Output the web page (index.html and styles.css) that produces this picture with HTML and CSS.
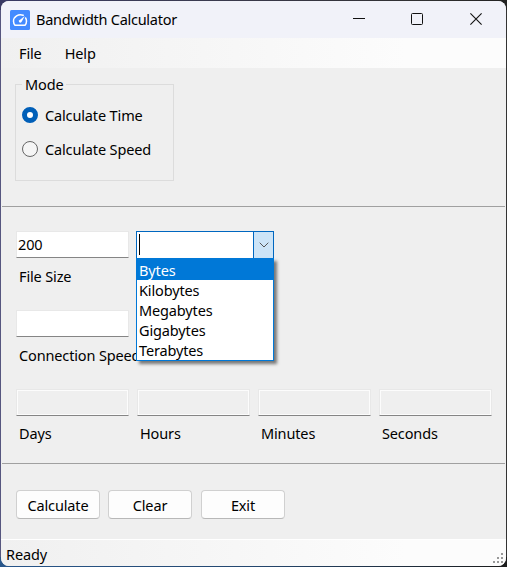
FILE: index.html
```
<!DOCTYPE html>
<html lang="en">
<head>
<meta charset="utf-8">
<title>Bandwidth Calculator</title>
<link rel="stylesheet" href="styles.css">
</head>
<body>
<div class="window">
  <header class="titlebar">
    <svg class="app-icon" width="20" height="20" viewBox="0 0 20 20">
      <rect width="20" height="20" rx="1.5" fill="#438bff"/>
      <path d="M13.2 5.2C8.500 3.500 3.500 6.500 3.500 11.200Q3.500 13.500 5 15.200H15Q16.500 13.500 16.500 11.200Q16.500 9.500 15.600 8" fill="none" stroke="#fff" stroke-width="1.500" stroke-linecap="round" stroke-linejoin="round"/>
      <path d="M14.800 6L11.500 12.100Q10.500 13.200 9.300 12.300Q8.300 11.200 9.400 10.200Z" fill="#fff"/>
    </svg>
    <h1 class="title">Bandwidth Calculator</h1>
    <div class="controls">
      <svg width="12" height="12" viewBox="0 0 12 12"><path d="M0 5.500H12" stroke="#111"/></svg>
      <svg width="12" height="12" viewBox="0 0 12 12"><rect x=".5" y=".5" width="11" height="11" rx="1" fill="none" stroke="#111"/></svg>
      <svg class="close" width="12" height="12" viewBox="0 0 12 12"><path d="M.4.4L11.600 11.600M11.600.4L.4 11.600" stroke="#111" stroke-width="1.100"/></svg>
    </div>
  </header>
  <nav class="menubar"><span>File</span><span class="help">Help</span></nav>
  <main>
    <section class="mode-section">
      <fieldset class="mode">
        <legend>Mode</legend>
        <label class="option"><i class="radio checked"></i><span>Calculate Time</span></label>
        <label class="option"><i class="radio"></i><span>Calculate Speed</span></label>
      </fieldset>
    </section>
    <section class="fields">
      <div class="row">
        <div class="field"><div class="input">200</div><div class="label">File Size</div></div>
        <div class="combo">
          <div class="combo-box">
            <span class="caret"></span>
            <span class="drop"><svg width="10" height="6" viewBox="0 0 10 6"><path d="M.7.7L5 5L9.300.7" fill="none" stroke="#555"/></svg></span>
          </div>
          <ul class="list">
            <li class="selected">Bytes</li>
            <li>Kilobytes</li>
            <li>Megabytes</li>
            <li>Gigabytes</li>
            <li>Terabytes</li>
          </ul>
        </div>
      </div>
      <div class="row">
        <div class="field"><div class="input"></div><div class="label">Connection Speed</div></div>
      </div>
      <div class="row results">
        <div class="field"><div class="input readonly"></div><div class="label">Days</div></div>
        <div class="field"><div class="input readonly"></div><div class="label">Hours</div></div>
        <div class="field"><div class="input readonly"></div><div class="label">Minutes</div></div>
        <div class="field"><div class="input readonly"></div><div class="label">Seconds</div></div>
      </div>
    </section>
    <section class="actions">
      <button>Calculate</button><button>Clear</button><button class="exit">Exit</button>
    </section>
  </main>
  <footer class="status">
    <span>Ready</span>
    <svg width="10" height="10" viewBox="0 0 10 10" fill="#999"><path d="M8 0h2v2H8zM4 4h2v2H4zM8 4h2v2H8zM0 8h2v2H0zM4 8h2v2H4zM8 8h2v2H8z"/></svg>
  </footer>
</div>
</body>
</html>
```
FILE: styles.css
```
* { box-sizing: border-box; }
body {
  margin: 0;
  height: 567px;
  padding: 1px;
  overflow: hidden;
  background: linear-gradient(90deg, #383964 0, #3b3b50 40%, #303030 85%, #222 100%) top / 100% 10px no-repeat,
    linear-gradient(90deg, #28568a 0, #24476f 50%, #1c1c1c 100%) bottom / 100% 10px no-repeat,
    linear-gradient(90deg, #56567f 50%, #333 50%);
  font: 14.5px/20px "Noto Sans", "Open Sans", sans-serif;
  letter-spacing: -0.14px;
  color: #000;
}
.window {
  display: flex;
  flex-direction: column;
  width: 505px;
  height: 565px;
  border-radius: 8px;
  overflow: hidden;
  background: #efefef;
}
.titlebar {
  display: flex;
  align-items: center;
  height: 37px;
  padding: 0 24px 0 9px;
  background: #f1f2f9;
}
.title { margin: -2px 0 0 6px; font-size: 14.5px; font-weight: 400; letter-spacing: -0.27px; }
.controls { display: flex; gap: 46px; margin: -1px 0 0 auto; }
.controls .close { margin-left: 1px; }
.controls svg, .app-icon { display: block; }
.menubar {
  display: flex;
  gap: 23px;
  height: 30px;
  padding: 5px 18px;
  background: linear-gradient(90deg, #f0f0f0, #fcfcfc 80%);
}
main { flex: 1; }
.mode-section {
  height: 139px;
  margin: 0 1px;
  padding: 7px 13px 0;
  border-bottom: 1px solid #a0a0a0;
}
.mode {
  width: 159px;
  height: 106px;
  margin: 0;
  padding: 11px 6px 0;
  border: 1px solid #dcdcdc;
}
.mode legend { height: 19px; padding: 0 3px; line-height: 19px; }
.option { display: flex; align-items: center; gap: 7px; height: 20px; margin-bottom: 14px; }
.radio {
  width: 16px;
  height: 16px;
  border: 1px solid #666;
  border-radius: 50%;
  background: #f5f5f5;
}
.radio.checked { border: 5px solid #005fb8; background: #fff; }
.fields {
  height: 257px;
  margin: 0 1px;
  padding: 24px 13px 0;
  border-bottom: 1px solid #a0a0a0;
}
.row { display: flex; gap: 8px; height: 79px; }
.field { width: 113px; white-space: nowrap; }
.input {
  width: 113px;
  height: 27px;
  margin-left: 1px;
  padding: 2px 1px;
  border: 1px solid #e8e8e8;
  border-bottom-color: #858585;
  background: #fff;
}
.readonly { background: #efefef; box-shadow: inset 0 0 0 1px #fcfcfc; }
.label { padding: 8px 0 0 4px; }
.results .label { padding-top: 7px; }
.combo { position: relative; width: 138px; height: 28px; }
.combo-box { display: flex; height: 28px; border: 1px solid #0067c0; background: #fff; }
.caret { width: 1px; height: 21px; margin: 2px 0 0 2px; background: #000; }
.drop {
  display: flex;
  align-items: center;
  justify-content: center;
  width: 20px;
  margin-left: auto;
  border-left: 1px solid #0067c0;
  background: #cce4f7;
}
.list {
  position: absolute;
  top: 27px;
  left: 0;
  width: 138px;
  margin: 0;
  padding: 0;
  border: 1px solid #0078d7;
  background: #fff;
  box-shadow: 3px 3px 3px rgba(0, 0, 0, .5);
  list-style: none;
}
.list li { height: 20px; padding-left: 2px; }
.list .selected { padding-top: 1px; height: 21px; background: #0078d7; color: #fff; }
.actions { display: flex; gap: 8px; padding: 26px 15px 0; }
button {
  width: 84px;
  height: 29px;
  padding: 0;
  border: 1px solid #d0d0d0;
  border-bottom-color: #b8b8b8;
  border-radius: 4px;
  background: #fdfdfd;
  font: inherit;
  letter-spacing: inherit;
}
.exit { margin-left: 1px; }
.status {
  display: flex;
  justify-content: space-between;
  height: 27px;
  padding: 4px 3px 0 5px;
  border-top: 1px solid #fff;
  background: linear-gradient(90deg, #f0f0f0, #fcfcfc 80%);
}
.status svg { margin-top: 9px; }
```
